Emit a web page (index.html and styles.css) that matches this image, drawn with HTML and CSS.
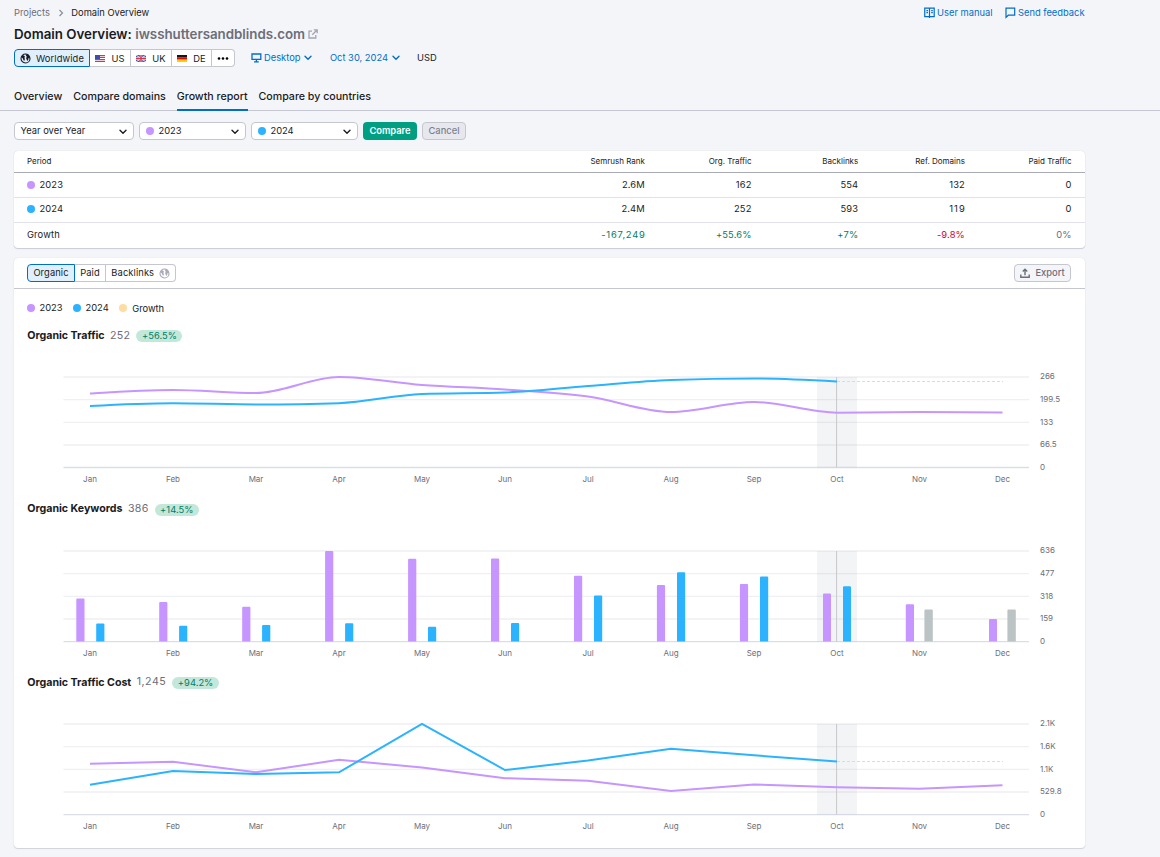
FILE: index.html
```html
<!DOCTYPE html>
<html lang="en">
<head>
<meta charset="utf-8">
<title>Domain Overview</title>
<link rel="stylesheet" href="styles.css">
</head>
<body>
<svg class="defs" width="0" height="0" aria-hidden="true">
  <symbol id="chev" viewBox="0 0 8 6"><path d="M1 1.2 4 4.2 7 1.2" fill="none" stroke="currentColor" stroke-width="1.4" stroke-linecap="round" stroke-linejoin="round"/></symbol>
  <symbol id="globe" viewBox="0 0 12 12"><circle cx="6" cy="6" r="4.9" fill="none" stroke="currentColor" stroke-width="1.2"/><path d="M1.4 4.6 3 2.2 4.6 3 5.6 4.4 4.6 5.2 5.4 6.6 4.6 8.8 3.6 7.4 3 5.6ZM6 1.3 9.4 2 10.8 4.6 10.6 6 9.4 5.4 8.9 7.6 7.8 8.6 7.2 6.8 6.6 5.6 7.4 4.2 6.8 3.2Z" fill="currentColor"/></symbol>
</svg>
<header class="top">
  <div class="crumbrow">
    <nav class="crumbs"><a class="muted" href="#">Projects</a><svg class="sep" viewBox="0 0 6 8"><path d="M1.5 1 4.5 4 1.5 7" fill="none" stroke="#8a8e9b" stroke-width="1.2"/></svg><span>Domain Overview</span></nav>
    <div class="help">
      <a href="#"><svg width="11" height="12" viewBox="0 0 11 12"><path d="M.75 1.2H10.2V9.6H.75ZM5.5 1.2V11M2.4 3.7H4M2.4 5.7H4M7.2 3.7H8.8M7.2 5.7H8.8" fill="none" stroke="currentColor" stroke-width="1.2"/></svg><span>User manual</span></a>
      <a href="#"><svg width="11" height="12" viewBox="0 0 11 12"><path d="M1 10.4V1.2H9.7V8.2H3.3Z" fill="none" stroke="currentColor" stroke-width="1.2"/></svg><span>Send feedback</span></a>
    </div>
  </div>
  <h1><span>Domain Overview:</span><span class="domain">iwsshuttersandblinds.com</span><svg width="10" height="10" viewBox="0 0 10 10"><path d="M4 2.2H1V9H7.8V6M5.8 .8H9.2V4.2M9 1 4.3 5.7" fill="none" stroke="#a2a5b1" stroke-width="1.3"/></svg></h1>
  <div class="filters">
    <div class="pills">
      <button class="pill active world"><svg width="11" height="11" class="dark"><use href="#globe"/></svg><span>Worldwide</span></button>
      <button class="pill us"><svg width="10" height="7" viewBox="0 0 10 7"><path fill="#fff" d="M0 0H10V7H0Z"/><path stroke="#e0324b" stroke-width="1.2" d="M0 .6H10M0 2.5H10M0 4.5H10M0 6.4H10"/><path fill="#3c4fb0" d="M0 0H5V4H0Z"/></svg><span>US</span></button>
      <button class="pill uk"><svg width="10" height="7" viewBox="0 0 10 7"><path fill="#435aa5" d="M0 0H10V7H0Z"/><path stroke="#fff" stroke-width=".9" d="M0 0 10 7M10 0 0 7"/><path stroke="#fff" stroke-width="2.4" d="M5 0V7M0 3.5H10"/><path stroke="#dc3349" stroke-width="1.5" d="M5 0V7M0 3.5H10"/></svg><span>UK</span></button>
      <button class="pill de"><svg width="10" height="7" viewBox="0 0 10 7"><path fill="#151515" d="M0 0H10V2.4H0Z"/><path fill="#e20613" d="M0 2.3H10V4.7H0Z"/><path fill="#ffce00" d="M0 4.6H10V7H0Z"/></svg><span>DE</span></button>
      <button class="pill more"><svg width="12" height="3" viewBox="0 0 12 3"><circle cx="2" cy="1.5" r="1.3"/><circle cx="6" cy="1.5" r="1.3"/><circle cx="10" cy="1.5" r="1.3"/></svg></button>
    </div>
    <a class="drop device" href="#"><svg width="11" height="10" viewBox="0 0 11 10"><path d="M1 1H9.8V6.4H1ZM5.4 6.4V8.8M3 8.9H7.8" fill="none" stroke="currentColor" stroke-width="1.3"/></svg><span>Desktop</span><svg width="8" height="6"><use href="#chev"/></svg></a>
    <a class="drop date" href="#"><span>Oct 30, 2024</span><svg width="8" height="6"><use href="#chev"/></svg></a>
    <span class="cur">USD</span>
  </div>
  <nav class="tabs"><a href="#">Overview</a><a href="#">Compare domains</a><a class="on" href="#">Growth report</a><a href="#">Compare by countries</a></nav>
</header>
<main>
  <div class="controls">
    <button class="select wide"><span>Year over Year</span><svg width="8" height="6"><use href="#chev"/></svg></button>
    <button class="select"><i class="dot purple"></i><span>2023</span><svg width="8" height="6"><use href="#chev"/></svg></button>
    <button class="select"><i class="dot blue"></i><span>2024</span><svg width="8" height="6"><use href="#chev"/></svg></button>
    <button class="compare">Compare</button>
    <button class="cancel">Cancel</button>
  </div>
  <section class="table">
    <div class="row head"><span>Period</span><span>Semrush Rank</span><span>Org. Traffic</span><span>Backlinks</span><span>Ref. Domains</span><span>Paid Traffic</span></div>
    <div class="row"><span><i class="dot purple"></i>2023</span><span>2.6M</span><span>162</span><span>554</span><span>132</span><span>0</span></div>
    <div class="row r2"><span><i class="dot blue"></i>2024</span><span>2.4M</span><span>252</span><span>593</span><span class="loose">119</span><span>0</span></div>
    <div class="row growth"><span>Growth</span><span class="up wide-num">-167,249</span><span class="up">+55.6%</span><span class="up">+7%</span><span class="down">-9.8%</span><span class="muted">0%</span></div>
  </section>
  <section class="card">
    <div class="bar">
      <div class="pills"><button class="pill active org">Organic</button><button class="pill paid">Paid</button><button class="pill back"><span>Backlinks</span><svg width="11" height="11"><use href="#globe"/></svg></button></div>
      <button class="export"><svg width="10" height="10" viewBox="0 0 10 10"><path d="M.8 6.5V9.2H9.2V6.5M5 7.2V1.5M2.7 3.6 5 1.3 7.3 3.6" fill="none" stroke="currentColor" stroke-width="1.4"/></svg><span>Export</span></button>
    </div>
    <div class="legend"><span><i class="dot purple"></i>2023</span><span><i class="dot blue"></i>2024</span><span class="gr"><i class="dot orange"></i><em>Growth</em></span></div>

    <h2><b>Organic Traffic</b><span class="val">252</span><span class="badge first">+56.5%</span></h2>
    <svg class="chart" viewBox="14 344 1071 148">
      <path class="grid" d="M63.5 377H1029M63.5 399.6H1029M63.5 422.3H1029M63.5 445H1029"/>
      <path class="axis" d="M63.5 467.5H1029"/>
      <path class="band" d="M817 377H857V467.5H817Z"/>
      <path class="dash" d="M837 381.5H1003"/>
      <path class="cursor" d="M836.6 377V467.5"/>
      <path class="line p" d="M90 393.5C117.7 391.8 145.3 390 173 390S228.3 393 256 393C283.7 393 311.3 377 339 377C366.7 377 394.3 383 422 385C449.7 387 477.3 387.6 505 389.5C532.7 391.4 560.3 392.8 588 396.5C615.7 400.2 643.3 412 671 412S726.3 402 754 402S809.3 412.7 837 412.7S892 412 919.5 412S975 412.2 1002.5 412.5"/>
      <path class="line b" d="M90 406C117.7 404.5 145.3 403.2 173 403.2S228.3 404.5 256 404.5C283.7 404.5 311.3 404.2 339 403.2C366.7 402.2 394.3 395 422 394C449.7 393 477.3 393.5 505 392.5C532.7 391.5 560.3 388.1 588 386C615.7 383.9 643.3 381 671 380C698.7 379 726.3 378.5 754 378.5S809.3 380 837 381.5"/>
      <g class="lab m" transform="translate(0 482)"><text x="90">Jan</text><text x="173">Feb</text><text x="256">Mar</text><text x="339">Apr</text><text x="422">May</text><text x="505">Jun</text><text x="588">Jul</text><text x="671">Aug</text><text x="754">Sep</text><text x="837">Oct</text><text x="919.5">Nov</text><text x="1002.5">Dec</text></g>
      <g class="lab"><text x="1040" y="379">266</text><text x="1040" y="402">199.5</text><text x="1040" y="425">133</text><text x="1040" y="447">66.5</text><text x="1040" y="470">0</text></g>
    </svg>

    <h2><b>Organic Keywords</b><span class="val">386</span><span class="badge">+14.5%</span></h2>
    <svg class="chart" viewBox="14 517 1071 148">
      <path class="grid" d="M63.5 551H1029M63.5 573.6H1029M63.5 596.3H1029M63.5 619H1029"/>
      <path class="axis" d="M63.5 641.6H1029"/>
      <path class="band" d="M817 551H857V641.5H817Z"/>
      <path class="cursor" d="M836.6 551V641.5"/>
      <path fill="#c695ff" d="M76.3 641.6V599.5q0-1 1-1h6.2q1 0 1 1V641.6ZM159.2 641.6V603q0-1 1-1h6.2q1 0 1 1V641.6ZM242.2 641.6V607.7q0-1 1-1h6.2q1 0 1 1V641.6ZM325.1 641.6V552q0-1 1-1h6.2q1 0 1 1V641.6ZM408.1 641.6V559.7q0-1 1-1h6.2q1 0 1 1V641.6ZM491 641.6V559.5q0-1 1-1h6.2q1 0 1 1V641.6ZM574 641.6V576.7q0-1 1-1h6.2q1 0 1 1V641.6ZM656.9 641.6V586q0-1 1-1h6.2q1 0 1 1V641.6ZM739.9 641.6V585q0-1 1-1h6.2q1 0 1 1V641.6ZM823 641.6V594.4q0-1 1-1h6q1 0 1 1V641.6ZM905.8 641.6V605.3q0-1 1-1h6.2q1 0 1 1V641.6ZM989 641.6V620q0-1 1-1h6q1 0 1 1V641.6Z"/>
      <path fill="#2bb3ff" d="M96.2 641.6V624.5q0-1 1-1h6.2q1 0 1 1V641.6ZM179.1 641.6V626.8q0-1 1-1h6.2q1 0 1 1V641.6ZM262.1 641.6V626q0-1 1-1h6.2q1 0 1 1V641.6ZM345.1 641.6V624.2q0-1 1-1h6.2q1 0 1 1V641.6ZM428 641.6V627.8q0-1 1-1h6.2q1 0 1 1V641.6ZM511 641.6V624q0-1 1-1h6.2q1 0 1 1V641.6ZM594 641.6V596.4q0-1 1-1h6.2q1 0 1 1V641.6ZM677 641.6V573.2q0-1 1-1h6.2q1 0 1 1V641.6ZM760 641.6V577.4q0-1 1-1h6.2q1 0 1 1V641.6ZM843 641.6V587.3q0-1 1-1h6q1 0 1 1V641.6Z"/>
      <path fill="#bbc3c5" d="M924.4 641.6V610.5q0-1 1-1h6.4q1 0 1 1V641.6ZM1007.4 641.6V610.5q0-1 1-1h6.4q1 0 1 1V641.6Z"/>
      <g class="lab m" transform="translate(0 656)"><text x="90">Jan</text><text x="173">Feb</text><text x="256">Mar</text><text x="339">Apr</text><text x="422">May</text><text x="505">Jun</text><text x="588">Jul</text><text x="671">Aug</text><text x="754">Sep</text><text x="837">Oct</text><text x="919.5">Nov</text><text x="1002.5">Dec</text></g>
      <g class="lab"><text x="1040" y="553">636</text><text x="1040" y="576">477</text><text x="1040" y="599">318</text><text x="1040" y="621">159</text><text x="1040" y="644">0</text></g>
    </svg>

    <h2><b class="low">Organic Traffic Cost</b><span class="val cost">1,245</span><span class="badge">+94.2%</span></h2>
    <svg class="chart" viewBox="14 690 1071 148">
      <path class="grid" d="M63.5 724H1029M63.5 746.6H1029M63.5 769.3H1029M63.5 792H1029"/>
      <path class="axis" d="M63.5 814.6H1029"/>
      <path class="band" d="M817 724H857V814.6H817Z"/>
      <path class="dash" d="M837 761.5H1003"/>
      <path class="cursor" d="M836.6 724V814.6"/>
      <path class="line p" d="M90 763.7 173 761.8 256 772.3 339 759.8 422 767.5 505 778.2 588 780.7 671 791 754 784.5 837 787.3 919.5 788.8 1002.5 785.2"/>
      <path class="line b" d="M90 784.7 173 771 256 774 339 772.3 422 724 505 770 588 760.5 671 748.7 754 755.3 837 761.5"/>
      <g class="lab m" transform="translate(0 829)"><text x="90">Jan</text><text x="173">Feb</text><text x="256">Mar</text><text x="339">Apr</text><text x="422">May</text><text x="505">Jun</text><text x="588">Jul</text><text x="671">Aug</text><text x="754">Sep</text><text x="837">Oct</text><text x="919.5">Nov</text><text x="1002.5">Dec</text></g>
      <g class="lab"><text x="1040" y="726">2.1K</text><text x="1040" y="749">1.6K</text><text x="1040" y="772">1.1K</text><text x="1040" y="794">529.8</text><text x="1040" y="817">0</text></g>
    </svg>
  </section>
</main>
</body>
</html>
```
FILE: styles.css
```css
* { box-sizing: border-box; }
body { margin: 0; height: 857px; overflow: hidden; background: #f4f5f9; color: #191b23; font: 9.33px/14px Inter, "Liberation Sans", sans-serif; }
a { color: inherit; text-decoration: none; }
button { font: inherit; color: inherit; margin: 0; padding: 0; display: flex; align-items: center; }
svg { flex: none; display: block; }
em { font-style: normal; }
.defs { position: absolute; }
.muted { color: #6c6e79; }
.top { height: 111px; border-bottom: 1px solid #c4c7cf; padding: 6px 75.5px 0 14px; }
.crumbrow { display: flex; justify-content: space-between; height: 14px; }
.crumbs { display: flex; align-items: center; letter-spacing: 0; }
.sep { width: 6px; height: 8px; margin: 0 7.5px 0 8px; }
.help { display: flex; gap: 12.5px; color: #006dca; letter-spacing: 0; }
.help a { display: flex; align-items: center; gap: 2px; }
h1 { margin: 5px 0 0; height: 18px; line-height: 18px; font-size: 13.33px; font-weight: 600; display: flex; align-items: center; letter-spacing: -.02px; }
.domain { color: #6c6e79; margin: 0 2.5px 0 3.5px; }
.filters { display: flex; margin-top: 6px; height: 18px; align-items: center; }
.pills { display: flex; }
.pill { height: 18px; background: #fff; border: 1px solid #c4c7cf; border-left-width: 0; justify-content: center; letter-spacing: .1px; }
.pill:first-child { border-left-width: 1px; border-radius: 4px 0 0 4px; }
.pill:last-child { border-radius: 0 4px 4px 0; }
.pill.active { border-color: #006dca; background: #e0effc; }
.filters .pill span { padding-top: 1px; }
.world { width: 76px; gap: 5px; } .us { width: 41px; gap: 6px; } .uk { width: 41px; gap: 6px; } .de { width: 40px; gap: 6px; } .more { width: 23px; }
.drop { display: flex; align-items: center; color: #006dca; gap: 4px; }
.device { margin-left: 16px; gap: 2px; } .device svg:last-child { margin-left: 2px; }
.date { margin-left: 17.5px; }
.cur { margin-left: 17px; letter-spacing: 0; }
.tabs { display: flex; gap: 11px; margin-top: 16px; height: 28px; line-height: 27.5px; font-size: 10.67px; font-weight: 500; letter-spacing: -.02px; }
.tabs .on { border-bottom: 2px solid #006dca; }
main { padding: 11px 75px 0 14px; }
.controls { display: flex; height: 18px; gap: 5px; }
.select { width: 107px; border: 1px solid #c4c7cf; border-radius: 4px; background: #fff; padding: 0 6px; }
.select.wide { width: 120px; padding-left: 5.5px; letter-spacing: .03px; }
.select svg { margin-left: auto; margin-top: 2px; }
.dot { display: inline-block; flex: none; width: 8px; height: 8px; border-radius: 50%; margin-right: 4.5px; }
.purple { background: #c695ff; } .blue { background: #2bb3ff; } .orange { background: #ffdca2; }
.compare, .cancel { justify-content: center; border: 0; border-radius: 4px; background: #009f81; color: #fff; width: 54px; font-weight: 600; }
.cancel { width: 44px; background: #e7e8ee; border: 1px solid #c4c7cf; color: #7d808c; font-weight: 500; }
.table { margin-top: 11px; height: 97px; background: #fff; border-radius: 4px; box-shadow: 0 1px 1px #c9cbd5, 0 0 1px #c9cbd5; overflow: visible; }
.row { display: grid; grid-template-columns: 1fr 110px 106.7px 106.7px 106.7px 106.6px; padding: 0 13.5px 0 13px; height: 25px; line-height: 24px; border-bottom: 1px solid #e0e1e9; text-align: right; letter-spacing: .15px; }
.row span:first-child { text-align: left; }
.row span:first-child:has(i) { display: flex; align-items: center; }
.head { height: 22px; line-height: 20px; font-size: 8px; border-color: #a9abb6; letter-spacing: 0; }
.r2 { line-height: 22px; }
.r2 span:first-child { height: 22px; }
.growth { border: 0; }
.wide-num { letter-spacing: .8px; margin-right: -.8px; }
.loose { letter-spacing: 1.1px; margin-right: -1px; }
.up { color: #007c65; } .down { color: #d1002f; }
.card { margin-top: 10px; height: 590px; background: #fff; border-radius: 4px; box-shadow: 0 1px 1px #d0d2da, 0 0 1px #c9cbd5; }
.bar { display: flex; justify-content: space-between; padding: 6px 14px 0 13px; height: 31px; border-bottom: 1px solid #c4c7cf; }
.org { width: 48px; } .paid { width: 31px; } .back { width: 70px; gap: 4.5px; } .back svg { color: #a9abb6; }
.export { height: 18px; width: 57px; justify-content: center; gap: 5px; background: #f4f5f9; border: 1px solid #c4c7cf; border-radius: 4px; color: #6c6e79; font-weight: 500; }
.legend { display: flex; gap: 10.5px; padding: 0 13px 1px; height: 39px; align-items: center; }
.legend span { display: flex; align-items: center; }
.legend em { padding-top: 1px; margin-left: .5px; }
h2 { margin: 0; padding-left: 13.3px; height: 16px; display: flex; align-items: center; font-size: 10.67px; line-height: 16px; font-weight: 400; }
h2 b { font-weight: 700; letter-spacing: -.03px; }
.low { padding-top: 1.5px; }
.val { margin: 0 6px 0 5.5px; color: #6c6e79; letter-spacing: .3px; }
.cost { letter-spacing: .5px; }
.badge { height: 12px; line-height: 12px; border-radius: 6px; background: #c3e8da; color: #007c65; font-size: 9.33px; padding: 0 5.5px; margin-top: 1px; letter-spacing: .05px; }
.first { margin-top: 0; }
.chart { width: 1071px; height: 148px; }
.chart + h2 { margin-top: 9px; }
.grid { stroke: #eff0f3; stroke-width: 1.3; }
.axis { stroke: #dcdee6; stroke-width: 1.3; }
.band { fill: #8a93a0; fill-opacity: .1; }
.dash { stroke: #d9dbe0; stroke-dasharray: 3 2; }
.cursor { stroke: #c6c8cd; }
.line { fill: none; stroke-width: 2; }
.line.p { stroke: #c695ff; } .line.b { stroke: #2bb3ff; }
.lab { font-size: 8px; fill: #6c6e79; }
.m { text-anchor: middle; }
```
